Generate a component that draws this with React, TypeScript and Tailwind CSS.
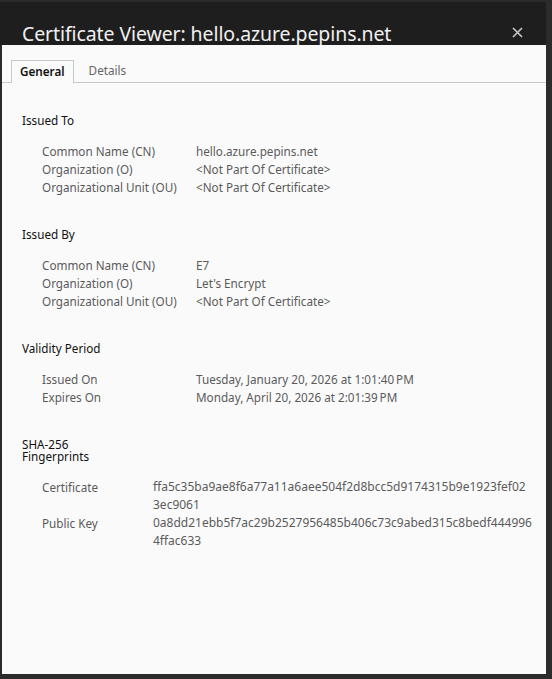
import React from 'react';

type Row = { label: string; value: string[] };

const sections: { title: string[]; rows: Row[]; narrow?: boolean }[] = [
  {
    title: ['Issued To'],
    rows: [
      { label: 'Common Name (CN)', value: ['hello.azure.pepins.net'] },
      { label: 'Organization (O)', value: ['<Not Part Of Certificate>'] },
      { label: 'Organizational Unit (OU)', value: ['<Not Part Of Certificate>'] },
    ],
  },
  {
    title: ['Issued By'],
    rows: [
      { label: 'Common Name (CN)', value: ['E7'] },
      { label: 'Organization (O)', value: ["Let's Encrypt"] },
      { label: 'Organizational Unit (OU)', value: ['<Not Part Of Certificate>'] },
    ],
  },
  {
    title: ['Validity Period'],
    rows: [
      { label: 'Issued On', value: ['Tuesday, January 20, 2026 at 1:01:40\u2009PM'] },
      { label: 'Expires On', value: ['Monday, April 20, 2026 at 2:01:39\u2009PM'] },
    ],
  },
  {
    title: ['SHA-256', 'Fingerprints'],
    narrow: true,
    rows: [
      {
        label: 'Certificate',
        value: ['ffa5c35ba9ae8f6a77a11a6aee504f2d8bcc5d9174315b9e1923fef02', '3ec9061'],
      },
      {
        label: 'Public Key',
        value: ['0a8dd21ebb5f7ac29b2527956485b406c73c9abed315c8bedf444996', '4ffac633'],
      },
    ],
  },
];

export default function App() {
  return (
    <div
      className="w-[552px] h-[679px] bg-[#2b2b2b] flex flex-col pr-[6px] pb-[5px] overflow-hidden"
      style={{ fontFamily: '"Noto Sans", "Open Sans", sans-serif' }}
    >
      {/* Title bar */}
      <div className="h-[43px] mt-[2px] bg-[#1e1e1e] flex items-end justify-between pl-[22px] pr-[23px] shrink-0">
        <h1 className="text-[19.5px] leading-[24px] text-[#f0f0f0] tracking-[-0.1px] mb-[-1px]">
          Certificate Viewer: hello.azure.pepins.net
        </h1>
        <button className="text-[#c4c4c4] mb-[7px]">
          <svg width="11" height="11" viewBox="0 0 11 11" fill="none" stroke="currentColor" strokeWidth="1.7">
            <path d="M1 1 L10 10 M10 1 L1 10" />
          </svg>
        </button>
      </div>

      {/* Body */}
      <div className="flex-1 ml-[2px] bg-[#fafafa] flex flex-col">
        {/* Tabs */}
        <div className="mt-[16px] flex items-end border-b border-[#c8c8c8] pl-[9px] h-[22px]">
          <div className="h-[23px] -mb-px px-[8px] flex items-center border border-b-0 border-[#c8c8c8] bg-[#fafafa] text-[11.7px] text-[#111] font-semibold">
            General
          </div>
          <div className="h-[22px] px-[15px] flex items-center text-[11.7px] text-[#666]">Details</div>
        </div>

        {/* Content */}
        <div className="pl-[20px] pt-[31px] flex flex-col gap-[32px] text-[11.7px]">
          {sections.map((s) => (
            <section key={s.title.join()} className="flex flex-col">
              <div className="text-[#111] leading-[12px] flex flex-col">
                {s.title.map((t) => (
                  <span key={t}>{t}</span>
                ))}
              </div>
              <div className="mt-[16px] pl-[20px] flex flex-col">
                {s.rows.map((r) => (
                  <div key={r.label} className="flex leading-[18px] text-[#5a5a5a]">
                    <span className={s.narrow ? 'w-[111px] shrink-0' : 'w-[154px] shrink-0'}>{r.label}</span>
                    <span className={s.narrow ? 'flex flex-col text-[12px]' : 'flex flex-col'}>
                      {r.value.map((v) => (
                        <span key={v} className="whitespace-nowrap">
                          {v}
                        </span>
                      ))}
                    </span>
                  </div>
                ))}
              </div>
            </section>
          ))}
        </div>
      </div>
    </div>
  );
}
